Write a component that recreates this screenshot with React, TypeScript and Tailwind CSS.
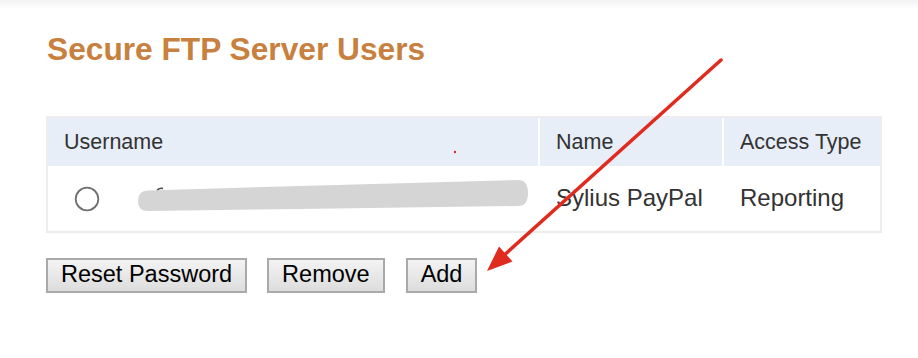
import React from "react";

function Btn({ children }: { children: React.ReactNode }) {
  return (
    <button className="h-[35px] px-[13px] border-2 border-[#a9a9a9] bg-gradient-to-b from-[#f3f3f3] to-[#dddddd] text-[23.5px] leading-none text-black">
      {children}
    </button>
  );
}

export default function App() {
  return (
    <div className="relative w-[918px] h-[358px] bg-white font-['Liberation_Sans',Arial,sans-serif] overflow-hidden">
      {/* top shadow */}
      <div className="h-[9px] bg-gradient-to-b from-[#f2f2f2] to-white" />

      <div className="pl-[46px]">
        <h1 className="mt-[25px] pl-[1px] text-[31.7px] leading-none font-bold text-[#c8803f]">
          Secure FTP Server Users
        </h1>

        {/* table */}
        <div className="mt-[50px] w-[836px] border-2 border-[#ededed] text-[#333]">
          <div className="grid grid-cols-[490px_182px_156px] gap-x-[2px] h-[48px] text-[21.5px]">
            <div className="flex items-center px-4 bg-[#e7eef8]">Username</div>
            <div className="flex items-center px-4 bg-[#e7eef8]">Name</div>
            <div className="flex items-center px-4 bg-[#e7eef8]">Access Type</div>
          </div>
          <div className="grid grid-cols-[490px_182px_156px] gap-x-[2px] h-[65px] text-[24px]">
            <div className="relative flex items-center">
              <svg width="490" height="65" viewBox="48 166 490 65" className="absolute inset-0">
                <circle cx="87" cy="199" r="11.3" fill="none" stroke="#6f6f6f" strokeWidth="1.8" />
                <path d="M157 190.5 Q159 187.5 163 188.5" fill="none" stroke="#444" strokeWidth="1.6" />
                <rect x="207" y="208" width="15" height="2" fill="#888" />
                <path
                  d="M148 190.5 L300 186 L518 180 Q528 180 528 193 Q528 206 518 206 L300 209 L148 211 Q138 211 138 201 Q138 190.5 148 190.5 Z"
                  fill="#d5d5d5"
                />
              </svg>
            </div>
            <div className="flex items-center px-4">Sylius PayPal</div>
            <div className="flex items-center px-4">Reporting</div>
          </div>
        </div>

        <div className="mt-[25px] flex gap-[20px]">
          <div className="flex">
            <Btn>Reset Password</Btn>
          </div>
          <Btn>Remove</Btn>
          <div className="ml-px">
            <Btn>Add</Btn>
          </div>
        </div>
      </div>

      {/* annotation */}
      <svg className="absolute inset-0 pointer-events-none" width="918" height="358">
        <circle cx="455" cy="152" r="1.2" fill="#e0281c" />
        <line x1="721" y1="60" x2="502" y2="257" stroke="#e02b1f" strokeWidth="3.5" strokeLinecap="round" />
        <polygon points="487,271 499,246.5 512.5,261.5" fill="#e02b1f" />
      </svg>
    </div>
  );
}
